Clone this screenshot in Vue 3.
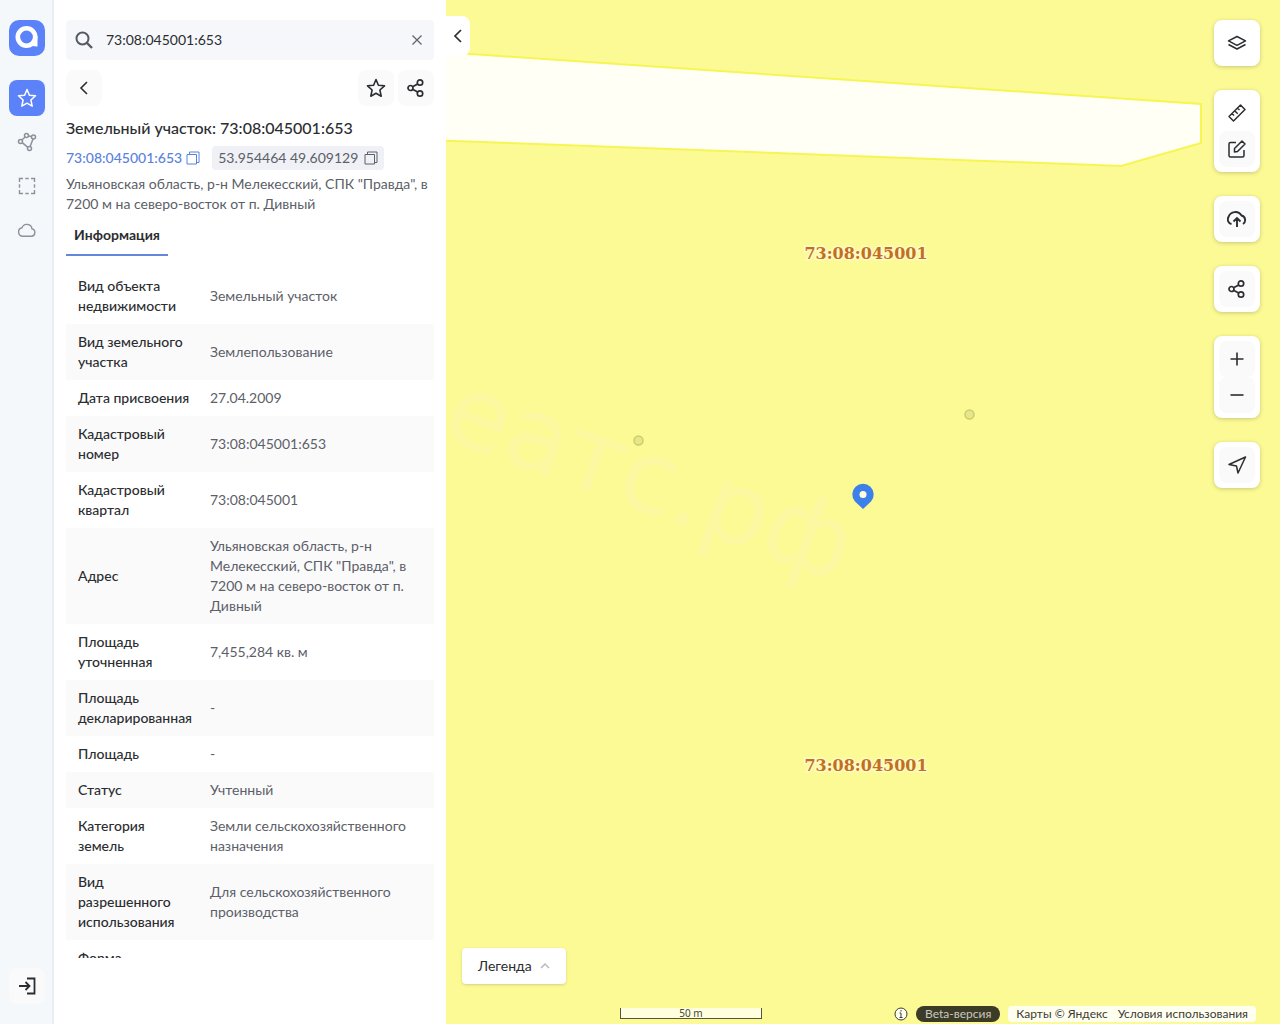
<script setup>
import { ref } from 'vue'

const query = ref('73:08:045001:653')

const rows = [
  ['Вид объекта недвижимости', 'Земельный участок'],
  ['Вид земельного участка', 'Землепользование'],
  ['Дата присвоения', '27.04.2009'],
  ['Кадастровый номер', '73:08:045001:653'],
  ['Кадастровый квартал', '73:08:045001'],
  ['Адрес', 'Ульяновская область, р-н Мелекесский, СПК "Правда", в 7200 м на северо-восток от п. Дивный'],
  ['Площадь уточненная', '7,455,284 кв. м'],
  ['Площадь декларированная', '-'],
  ['Площадь', '-'],
  ['Статус', 'Учтенный'],
  ['Категория земель', 'Земли сельскохозяйственного назначения'],
  ['Вид разрешенного использования', 'Для сельскохозяйственного производства'],
  ['Форма собственности', '-'],
]
</script>

<template>
  <div class="app">
    <nav class="rail">
      <a href="#" class="logo" aria-label="Главная">
        <svg width="36" height="36" viewBox="0 0 36 36" fill="none">
          <circle cx="17.500" cy="17" r="8.700" stroke="#fff" stroke-width="4.600" />
          <path d="M21 24l7.500-8v10.500q-4 .5-7.500-2.500z" fill="#fff" />
        </svg>
      </a>
      <button class="rail-btn active" aria-label="Избранное">
        <svg width="20" height="20" viewBox="0 0 20 20" fill="none" stroke="currentColor" stroke-width="1.500" stroke-linejoin="round">
          <path d="M10 1.500l2.400 5.700 6.100.6-4.600 4.200 1.300 6.200L10 15.200l-5.200 3 1.300-6.200L1.500 7.800l6.100-.6z" />
        </svg>
      </button>
      <button class="rail-btn" aria-label="Полигон">
        <svg width="20" height="20" viewBox="0 0 20 20" fill="none" stroke="currentColor" stroke-width="1.500">
          <circle cx="9.500" cy="3.500" r="2" /><circle cx="16.500" cy="5" r="2" /><circle cx="3.500" cy="9.500" r="2" /><circle cx="12.500" cy="16.500" r="2" />
          <path d="M8.200 5L4.800 8M11.500 4l3 .6M16 7l-2.900 7.600M5.200 10.600l5.700 4.700" />
        </svg>
      </button>
      <button class="rail-btn" aria-label="Область">
        <svg width="20" height="20" viewBox="0 0 20 20" fill="none" stroke="currentColor" stroke-width="1.400">
          <path d="M2.500 6V2.500H6M8.300 2.500h3.400M14 2.500h3.500V6M17.500 8.300v3.400M17.500 14v3.500H14M11.700 17.500H8.300M6 17.500H2.500V14M2.500 11.700V8.300" />
        </svg>
      </button>
      <button class="rail-btn" aria-label="Облако">
        <svg width="20" height="20" viewBox="0 0 20 20" fill="none" stroke="currentColor" stroke-width="1.400">
          <path d="M6 16.200h8.300a3.700 3.700 0 0 0 .7-7.300A5.200 5.200 0 0 0 5 7.700 4.300 4.300 0 0 0 6 16.200z" />
        </svg>
      </button>
      <button class="rail-btn login" aria-label="Войти">
        <svg width="20" height="20" viewBox="0 0 20 20" fill="none" stroke="currentColor" stroke-width="1.800">
          <path d="M10 2.500h7.500v15H10M2 10h10.500M8.500 6l4 4-4 4" />
        </svg>
      </button>
    </nav>

    <aside class="panel">
      <div class="search">
        <svg width="20" height="20" viewBox="0 0 20 20" fill="none" stroke="#555b61" stroke-width="2">
          <circle cx="8.500" cy="8.500" r="6" /><path d="M13 13l5 5" stroke-width="2.400" />
        </svg>
        <input v-model="query" type="text" aria-label="Поиск" />
        <button class="clear" aria-label="Очистить" @click="query = ''">
          <svg width="12" height="12" viewBox="0 0 12 12" stroke="#62666b" stroke-width="1.300"><path d="M1.500 1.500l9 9M10.500 1.500l-9 9" /></svg>
        </button>
      </div>

      <div class="toolbar">
        <button class="square" aria-label="Назад">
          <svg width="20" height="20" viewBox="0 0 20 20" fill="none" stroke="currentColor" stroke-width="1.600"><path d="M13 4l-6 6 6 6" /></svg>
        </button>
        <button class="square push" aria-label="В избранное">
          <svg width="20" height="20" viewBox="0 0 20 20" fill="none" stroke="currentColor" stroke-width="1.600" stroke-linejoin="round">
            <path d="M10 1.500l2.400 5.700 6.100.6-4.600 4.200 1.300 6.200L10 15.200l-5.200 3 1.300-6.200L1.500 7.800l6.100-.6z" />
          </svg>
        </button>
        <button class="square" aria-label="Поделиться">
          <svg width="20" height="20" viewBox="0 0 20 20" fill="none" stroke="currentColor" stroke-width="1.700">
            <circle cx="4.500" cy="10" r="2.500" /><circle cx="14" cy="4.500" r="2.700" /><circle cx="14" cy="15.500" r="2.700" />
            <path d="M7 8.600l4.700-2.700M7 11.400l4.700 2.700" />
          </svg>
        </button>
      </div>

      <h1>Земельный участок: 73:08:045001:653</h1>

      <div class="chips">
        <a href="#" class="cad">73:08:045001:653
          <svg width="14" height="14" viewBox="0 0 14 14" fill="none" stroke="currentColor"><path d="M1 3.500h9.500V13H1zM3.500 3.500V1H13v10.500h-2.500" /></svg>
        </a>
        <button class="coords">53.954464 49.609129
          <svg width="14" height="14" viewBox="0 0 14 14" fill="none" stroke="currentColor"><path d="M1 3.500h9.500V13H1zM3.500 3.500V1H13v10.500h-2.500" /></svg>
        </button>
      </div>

      <p class="address">Ульяновская область, р-н Мелекесский, СПК "Правда", в 7200 м на северо-восток от п. Дивный</p>

      <div class="tabs"><button class="tab">Информация</button></div>

      <div class="scroll">
        <table>
          <tbody>
            <tr v-for="[name, value] in rows" :key="name">
              <th scope="row">{{ name }}</th>
              <td>{{ value }}</td>
            </tr>
          </tbody>
        </table>
      </div>
    </aside>

    <main class="map">
      <svg class="canvas" width="100%" height="100%">
        <path d="M-4 52L755 104V143L675 166L-4 140.500Z" fill="#fffff6" stroke="#f7f554" stroke-width="2" />
        <text class="watermark" transform="translate(-7 437) rotate(20)">еатс.рф</text>
        <g fill="#e6e68a" stroke="#cdcd6c" stroke-width="1.500">
          <circle cx="192.500" cy="440.500" r="4.500" />
          <circle cx="523.500" cy="414.500" r="4.500" />
        </g>
        <g class="quarter">
          <text x="420" y="259">73:08:045001</text>
          <text x="420" y="771">73:08:045001</text>
        </g>
        <path d="M417 509l-8-7.500a10.700 10.700 0 1 1 16 0z" fill="#3d80ea" />
        <circle cx="417" cy="494.500" r="3.500" fill="#fffde0" />
      </svg>

      <button class="collapse" aria-label="Свернуть панель">
        <svg width="20" height="20" viewBox="0 0 20 20" fill="none" stroke="currentColor" stroke-width="1.700"><path d="M13 4l-6 6 6 6" /></svg>
      </button>

      <div class="controls">
        <div class="group">
          <button aria-label="Слои">
            <svg width="20" height="20" viewBox="0 0 20 20" fill="none" stroke="currentColor" stroke-width="1.500" stroke-linejoin="round">
              <path d="M10 3.500l8.500 4.400L10 12.300 1.500 7.900zM1.500 11.500L10 16l8.500-4.500" />
            </svg>
          </button>
        </div>
        <div class="group">
          <button aria-label="Линейка">
            <svg width="20" height="20" viewBox="0 0 20 20" fill="none" stroke="currentColor" stroke-width="1.500" stroke-linejoin="round">
              <path d="M13.500 2L18 6.500 6.500 18 2 13.500zM5 10.500l2 2M7.700 7.800l3 3M10.500 5l2 2" />
            </svg>
          </button>
          <button class="tint" aria-label="Рисование">
            <svg width="20" height="20" viewBox="0 0 20 20" fill="none" stroke="currentColor" stroke-width="1.500" stroke-linejoin="round">
              <path d="M9 3.500H3.500Q2 3.500 2 5v11.500Q2 18 3.500 18h12q1.500 0 1.500-1.500V11" />
              <path d="M7.500 9.500l7.500-7.500 3 3-7.500 7.500-3 .5z" />
            </svg>
          </button>
        </div>
        <div class="group">
          <button class="tint" aria-label="Загрузить">
            <svg width="20" height="20" viewBox="0 0 20 20" fill="none" stroke="currentColor" stroke-width="1.900">
              <path d="M4.500 15A4.700 4.700 0 0 1 1.500 8 7.200 7.200 0 0 1 14.500 6.500a4.700 4.700 0 0 1 1.500 8.500M10 18v-8M6.500 12.500L10 9l3.500 3.500" />
            </svg>
          </button>
        </div>
        <div class="group">
          <button class="tint" aria-label="Поделиться картой">
            <svg width="20" height="20" viewBox="0 0 20 20" fill="none" stroke="currentColor" stroke-width="1.700">
              <circle cx="4.500" cy="10" r="2.500" /><circle cx="14" cy="4.500" r="2.700" /><circle cx="14" cy="15.500" r="2.700" />
              <path d="M7 8.600l4.700-2.700M7 11.400l4.700 2.700" />
            </svg>
          </button>
        </div>
        <div class="group">
          <button class="tint" aria-label="Приблизить">
            <svg width="20" height="20" viewBox="0 0 20 20" stroke="currentColor" stroke-width="1.600"><path d="M3.500 10h13M10 3.500v13" /></svg>
          </button>
          <button class="tint" aria-label="Отдалить">
            <svg width="20" height="20" viewBox="0 0 20 20" stroke="currentColor" stroke-width="1.600"><path d="M3.500 10h13" /></svg>
          </button>
        </div>
        <div class="group">
          <button class="tint" aria-label="Моё местоположение">
            <svg width="20" height="20" viewBox="0 0 20 20" fill="none" stroke="currentColor" stroke-width="1.500" stroke-linejoin="round">
              <path d="M18.500 2L2 9.500l7.500 1.500 1.500 7z" />
            </svg>
          </button>
        </div>
      </div>

      <button class="legend">Легенда
        <svg width="10" height="10" viewBox="0 0 10 10" fill="none" stroke="#b9b9b9" stroke-width="1.500"><path d="M1 7l4-4 4 4" /></svg>
      </button>

      <div class="scale">50 m</div>

      <footer class="credits">
        <svg width="14" height="14" viewBox="0 0 14 14" fill="#fffff0" stroke="#3b3b32"><circle cx="7" cy="7" r="6" /><path d="M7 3v1.500M5.500 6H7v4.500M5.500 10.500h3" /></svg>
        <span class="beta">Beta-версия</span>
        <span class="terms">
          <span>Карты © Яндекс</span>
          <a href="#">Условия использования</a>
        </span>
      </footer>
    </main>
  </div>
</template>

<style>
body {
  margin: 0;
  background: #fff;
}
</style>

<style scoped>
* {
  box-sizing: border-box;
}
.app {
  display: flex;
  height: 100vh;
  overflow: hidden;
  font: 14px/20px Lato, "Open Sans", sans-serif;
  color: #2b2d30;
}
button {
  margin: 0;
  padding: 0;
  border: 0;
  background: none;
  font: inherit;
  color: inherit;
}
a {
  color: inherit;
  text-decoration: none;
}
svg {
  display: block;
  flex: none;
}

.rail {
  display: flex;
  flex-direction: column;
  align-items: center;
  gap: 8px;
  flex: none;
  width: 54px;
  padding: 20px 0 20px 2px;
  background: #f4f8fa;
  border-right: 2px solid #e8eef3;
}
.logo {
  margin-bottom: 16px;
  border-radius: 10px;
  background: #5c82fa;
}
.rail-btn {
  display: grid;
  place-items: center;
  width: 36px;
  height: 36px;
  border-radius: 8px;
  color: #8b929b;
}
.rail-btn.active {
  background: #5c82fa;
  color: #fff;
}
.rail-btn.login {
  margin-top: auto;
  background: #fafafb;
  color: #2b2d30;
}

.panel {
  display: flex;
  flex-direction: column;
  flex: none;
  width: 392px;
  padding: 20px 12px 66px;
  background: #fff;
}
.search {
  display: flex;
  align-items: center;
  height: 40px;
  flex: none;
  padding: 0 8px;
  background: #f5f7fa;
  border-radius: 4px;
}
.search input {
  flex: 1;
  min-width: 0;
  padding: 0 12px;
  border: 0;
  outline: 0;
  background: none;
  font: inherit;
  color: inherit;
}
.clear {
  display: grid;
  place-items: center;
  width: 18px;
  height: 24px;
}
.toolbar {
  display: flex;
  gap: 4px;
  margin: 10px 0;
}
.square {
  display: grid;
  place-items: center;
  width: 36px;
  height: 36px;
  border-radius: 8px;
  background: #fafafb;
}
.push {
  margin-left: auto;
}
h1 {
  margin: 0 0 6px;
  font-size: 16px;
  line-height: 24px;
  font-weight: 500;
}
.chips {
  display: flex;
  align-items: center;
  gap: 12px;
  margin-bottom: 4px;
}
.cad,
.coords {
  display: flex;
  align-items: center;
  height: 24px;
  white-space: nowrap;
}
.cad {
  gap: 4px;
  font-weight: 500;
  color: #5a82dc;
}
.coords {
  gap: 6px;
  padding: 0 6px;
  border-radius: 4px;
  background: #eff1f6;
  color: #5c6068;
}
.address {
  margin: 0;
  color: #5c6068;
}
.tabs {
  display: flex;
  margin-bottom: 12px;
}
.tab {
  height: 42px;
  padding: 2px 8px 0;
  border-bottom: 2px solid #6487dc;
  font-weight: 700;
}
.scroll {
  flex: 1;
  min-height: 0;
  overflow: hidden;
}
table {
  width: 100%;
  table-layout: fixed;
  border-collapse: collapse;
}
tr:nth-child(even) {
  background: #fafafb;
}
th,
td {
  padding: 8px 12px;
  text-align: left;
  vertical-align: middle;
}
th {
  width: 132px;
  padding-right: 5px;
  font-weight: 500;
}
td {
  color: #5c6068;
}

.map {
  position: relative;
  flex: 1;
  min-width: 0;
  background: #fcfa94;
  overflow: hidden;
}
.canvas {
  position: absolute;
  inset: 0;
}
.watermark {
  font: 102px "DejaVu Sans", sans-serif;
  fill: #fcf8a2;
}
.quarter {
  font: bold 16px "DejaVu Serif", serif;
  text-anchor: middle;
  fill: #c2701f;
  stroke: #fffcc8;
  stroke-width: 3px;
  paint-order: stroke;
}
.collapse {
  position: absolute;
  left: 0;
  top: 16px;
  display: grid;
  place-items: center;
  width: 24px;
  height: 40px;
  border-radius: 0 8px 8px 0;
  background: #fff;
}
.controls {
  position: absolute;
  top: 20px;
  right: 20px;
  display: flex;
  flex-direction: column;
  gap: 24px;
}
.group {
  padding: 5px;
  border-radius: 8px;
  background: #fff;
  box-shadow: 0 1px 4px rgba(0, 0, 0, 0.2);
}
.group button {
  display: grid;
  place-items: center;
  width: 36px;
  height: 36px;
  border-radius: 8px;
}
.group .tint {
  background: #fafafb;
}
.legend {
  position: absolute;
  left: 16px;
  bottom: 40px;
  display: flex;
  align-items: center;
  gap: 8px;
  height: 36px;
  padding: 0 16px;
  border-radius: 4px;
  background: #fff;
  box-shadow: 0 1px 3px rgba(0, 0, 0, 0.16);
}
.scale {
  position: absolute;
  right: 518px;
  bottom: 5px;
  width: 142px;
  height: 11px;
  border: 1px solid #55553c;
  border-top: 0;
  background: #ffffdf;
  font: 10px/10px "Noto Sans", sans-serif;
  color: #44443a;
  text-align: center;
}
.credits {
  position: absolute;
  right: 24px;
  bottom: 2px;
  display: flex;
  align-items: center;
  gap: 8px;
  font-size: 12px;
  line-height: 16px;
  white-space: nowrap;
}
.beta {
  padding: 0 9px;
  border-radius: 8px;
  background: #3b3b28;
  color: #c9c9bf;
}
.terms {
  display: flex;
  gap: 10px;
  padding: 0 8px;
  border-radius: 4px;
  background: #fffff0;
  color: #3b3b32;
}
</style>
